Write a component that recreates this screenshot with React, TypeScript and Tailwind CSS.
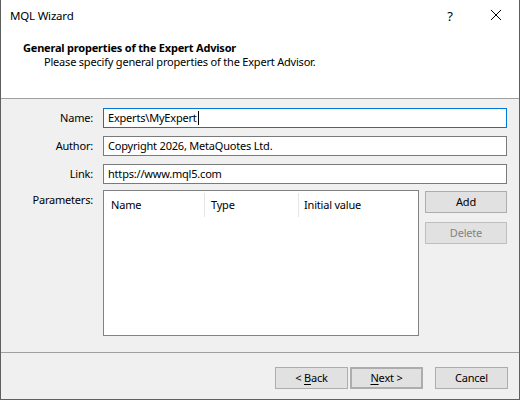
import React from "react";

const font = { fontFamily: '"Noto Sans", "Open Sans", sans-serif' };

function Field({ label, value, focused = false }: { label: string; value: string; focused?: boolean }) {
  return (
    <div className="flex items-center">
      <span className="w-[92px] text-right">{label}</span>
      <div
        className={`ml-[10px] flex h-[20px] w-[404px] items-center border bg-white pl-[4px] ${
          focused ? "border-[#0078d7]" : "border-[#7a7a7a]"
        }`}
      >
        <span>{value}</span>
        {focused && <span className="ml-[1px] h-[14px] w-px bg-black" />}
      </div>
    </div>
  );
}

function Button({
  children,
  className = "",
}: {
  children: React.ReactNode;
  className?: string;
}) {
  return (
    <div
      className={`flex h-[22px] w-[73px] items-center justify-center border border-[#adadad] bg-[#e1e1e1] ${className}`}
    >
      {children}
    </div>
  );
}

export default function App() {
  return (
    <div
      className="flex h-[400px] w-[520px] flex-col border-x border-b border-[#5f5f5f] bg-[#f0f0f0] text-[11px] leading-[14px] tracking-[-0.2px] text-black"
      style={font}
    >
      {/* title bar + page header */}
      <div className="h-[99px] border-b border-[#a0a0a0] bg-white">
        <div className="flex h-[31px] items-center pl-[9px]">
          <span className="flex-1 text-[11.5px]">MQL Wizard</span>
          <span className="w-[46px] text-center text-[13px]">?</span>
          <svg width="46" height="31" viewBox="0 0 46 31">
            <path d="M18 10 L28 20 M28 10 L18 20" stroke="#000" strokeWidth="1" />
          </svg>
        </div>
        <div className="pl-[22px] pt-[10px] font-bold">General properties of the Expert Advisor</div>
        <div className="pl-[43px]">Please specify general properties of the Expert Advisor.</div>
      </div>

      {/* form */}
      <div className="h-[254px] border-b border-[#a0a0a0] pt-[9px]">
        <div className="flex flex-col gap-[8px]">
          <Field label="Name:" value="Experts\MyExpert" focused />
          <Field label="Author:" value="Copyright 2026, MetaQuotes Ltd." />
          <Field label="Link:" value="https://www.mql5.com" />
        </div>
        <div className="mt-[6px] flex">
          <span className="w-[92px] pt-[3px] text-right">Parameters:</span>
          <div className="ml-[10px] h-[146px] w-[316px] border border-[#828282] bg-white">
            <div className="flex h-[26px] items-center pt-[1px]">
              <span className="w-[100px] pl-[7px]">Name</span>
              <span className="h-[24px] w-px bg-[#e5e5e5]" />
              <span className="w-[93px] pl-[6px]">Type</span>
              <span className="h-[24px] w-px bg-[#e5e5e5]" />
              <span className="pl-[5px]">Initial value</span>
            </div>
          </div>
          <div className="ml-[6px] flex flex-col gap-[9px] pt-[1px]">
            <Button className="h-[21px] w-[82px]">Add</Button>
            <Button className="h-[21px] w-[82px] border-[#bfbfbf] bg-[#cccccc] text-[#838383]">
              Delete
            </Button>
          </div>
        </div>
      </div>

      {/* navigation */}
      <div className="flex pl-[274px] pt-[14px]">
        <Button>
          &lt;&nbsp;<span className="underline underline-offset-2">B</span>ack
        </Button>
        <Button className="ml-[2px] border-2 border-[#0078d7]">
          <span className="underline underline-offset-2">N</span>ext &gt;
        </Button>
        <Button className="ml-[12px]">Cancel</Button>
      </div>
    </div>
  );
}
